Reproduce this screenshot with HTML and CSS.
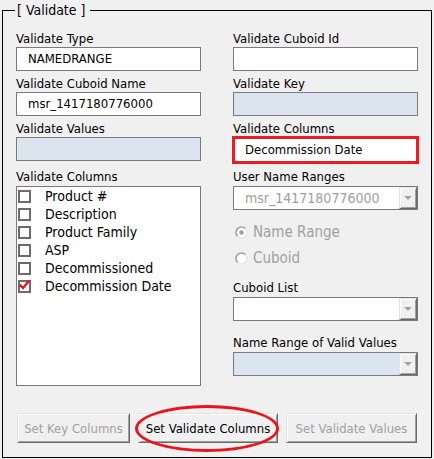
FILE: index.html
```html
<!DOCTYPE html>
<html>
<head>
<meta charset="utf-8">
<link rel="stylesheet" href="styles.css">
</head>
<body>
<fieldset class="frame">
  <legend class="frame-title">[ Validate ]</legend>
  <div class="columns">
    <div class="col">
      <div class="field">
        <div class="lbl">Validate Type</div>
        <div class="box">NAMEDRANGE</div>
      </div>
      <div class="field">
        <div class="lbl">Validate Cuboid Name</div>
        <div class="box">msr_1417180776000</div>
      </div>
      <div class="field">
        <div class="lbl">Validate Values</div>
        <div class="box box-disabled"></div>
      </div>
      <div class="field field-list">
        <div class="lbl">Validate Columns</div>
        <ul class="checklist">
          <li class="check-item"><span class="check"></span>Product #</li>
          <li class="check-item"><span class="check"></span>Description</li>
          <li class="check-item"><span class="check"></span>Product Family</li>
          <li class="check-item"><span class="check"></span>ASP</li>
          <li class="check-item"><span class="check"></span>Decommissioned</li>
          <li class="check-item"><span class="check"><svg class="tick" width="13" height="13" viewBox="0 0 13 13"><path d="M2.5 5.5 L5 8 L10.5 1.5" fill="none" stroke="#e8141e" stroke-width="2.4" stroke-linecap="square"/></svg></span>Decommission Date</li>
        </ul>
      </div>
    </div>
    <div class="col">
      <div class="field">
        <div class="lbl">Validate Cuboid Id</div>
        <div class="box"></div>
      </div>
      <div class="field">
        <div class="lbl">Validate Key</div>
        <div class="box box-disabled"></div>
      </div>
      <div class="field">
        <div class="lbl">Validate Columns</div>
        <div class="box box-marked">Decommission Date</div>
      </div>
      <div class="field field-gap5">
        <div class="lbl">User Name Ranges</div>
        <div class="combo">
          <span class="combo-value">msr_1417180776000</span>
          <span class="combo-btn"><span class="arrow"></span></span>
        </div>
      </div>
      <div class="radios">
        <div class="radio-row">
          <svg class="radio" width="13" height="13" viewBox="0 0 13 13">
            <circle cx="6.5" cy="6.5" r="5.5" fill="#ffffff"/>
            <path d="M2.6 10.4 A5.5 5.5 0 0 1 10.4 2.6" fill="none" stroke="#a0a0a0" stroke-width="1.6"/>
            <path d="M10.4 2.6 A5.5 5.5 0 0 1 2.6 10.4" fill="none" stroke="#e3e3e3" stroke-width="1.2"/>
            <circle cx="6.5" cy="6.5" r="2.2" fill="#a0a0a0"/>
          </svg>
          <span class="radio-text">Name Range</span>
        </div>
        <div class="radio-row">
          <svg class="radio" width="13" height="13" viewBox="0 0 13 13">
            <circle cx="6.5" cy="6.5" r="5.5" fill="#ffffff"/>
            <path d="M2.6 10.4 A5.5 5.5 0 0 1 10.4 2.6" fill="none" stroke="#a0a0a0" stroke-width="1.6"/>
            <path d="M10.4 2.6 A5.5 5.5 0 0 1 2.6 10.4" fill="none" stroke="#e3e3e3" stroke-width="1.2"/>
          </svg>
          <span class="radio-text">Cuboid</span>
        </div>
      </div>
      <div class="field field-gap12">
        <div class="lbl">Cuboid List</div>
        <div class="combo">
          <span class="combo-value"></span>
          <span class="combo-btn"><span class="arrow"></span></span>
        </div>
      </div>
      <div class="field field-gap14">
        <div class="lbl">Name Range of Valid Values</div>
        <div class="combo combo-disabled">
          <span class="combo-value"></span>
          <span class="combo-btn"><span class="arrow"></span></span>
        </div>
      </div>
    </div>
  </div>
  <div class="buttons">
    <button class="btn btn-key" disabled>Set Key Columns</button>
    <button class="btn btn-active">Set Validate Columns<span class="ring"></span></button>
    <button class="btn btn-values" disabled>Set Validate Values</button>
  </div>
</fieldset>
</body>
</html>
```

FILE: styles.css
```css
html, body {
  margin: 0;
  padding: 0;
  background: #f0f0f0;
}

body {
  width: 434px;
  height: 459px;
  overflow: hidden;
  font-family: "DejaVu Sans Condensed", "DejaVu Sans", sans-serif;
  font-stretch: condensed;
  font-size: 13px;
  color: #000;
}

.frame {
  box-sizing: border-box;
  width: 430px;
  margin: 1px 0 0 2px;
  padding: 12px 13px 14px 13px;
  border: 1px solid #000;
  min-width: 0;
}

.frame-title {
  font-size: 14px;
  line-height: 18px;
  padding: 0 5px 0 2px;
  margin-left: -1px;
}

.columns {
  display: grid;
  grid-template-columns: 185px 185px;
  column-gap: 32px;
  align-items: start;
}

.col {
  display: flex;
  flex-direction: column;
}

.field {
  display: flex;
  flex-direction: column;
}

.field + .field {
  margin-top: 5px;
}

.field.field-list {
  margin-top: 8px;
}

.field.field-gap5 {
  margin-top: 5px;
}

.field.field-gap12 {
  margin-top: 12px;
}

.field.field-gap14 {
  margin-top: 14px;
}

.lbl {
  height: 15px;
  line-height: 15px;
  white-space: nowrap;
}

.box {
  box-sizing: border-box;
  height: 24px;
  margin-top: 1px;
  border: 1px solid #7a7a7a;
  background: #fff;
  padding-left: 11px;
  line-height: 22px;
  font-size: 13px;
  white-space: nowrap;
}

.box-disabled {
  background: #dce5ef;
}

.box-marked {
  height: 28px;
  margin-top: 0;
  margin-left: -1px;
  width: 187px;
  border: 3px solid #ec1c24;
  padding-left: 10px;
  line-height: 22px;
}

.checklist {
  list-style: none;
  margin: 2px 0 0 0;
  padding: 0;
  box-sizing: border-box;
  height: 200px;
  border: 1px solid #7a7a7a;
  background: #fff;
}

.check-item {
  display: flex;
  align-items: flex-start;
  height: 18px;
  line-height: 18px;
  font-size: 14px;
  white-space: nowrap;
}

.check {
  position: relative;
  box-sizing: border-box;
  flex: none;
  width: 13px;
  height: 13px;
  margin: 3px 14px 0 1px;
  border: 2px solid #6b6b6b;
  background: #fff;
}

.tick {
  position: absolute;
  left: -2px;
  top: -2px;
  overflow: visible;
}

.combo {
  box-sizing: border-box;
  display: flex;
  height: 24px;
  margin-top: 2px;
  border: 1px solid #7a7a7a;
  background: #fff;
}

.combo-disabled {
  background: #dce5ef;
}

.combo-value {
  flex: 1;
  padding-left: 11px;
  line-height: 22px;
  font-size: 14px;
  color: #a0a0a0;
  white-space: nowrap;
  overflow: hidden;
}

.combo-btn {
  box-sizing: border-box;
  flex: none;
  width: 18px;
  height: 22px;
  display: flex;
  align-items: center;
  justify-content: center;
  background: #f0f0f0;
  border-style: solid;
  border-width: 1px;
  border-color: #e3e3e3 #696969 #696969 #e3e3e3;
  box-shadow: inset 1px 1px #ffffff, inset -1px -1px #a0a0a0;
}

.arrow {
  width: 0;
  height: 0;
  border-left: 4px solid transparent;
  border-right: 4px solid transparent;
  border-top: 4px solid #a0a0a0;
}

.radios {
  display: flex;
  flex-direction: column;
  gap: 6px;
  margin-top: 12px;
}

.radio-row {
  display: flex;
  align-items: center;
  height: 20px;
  line-height: 20px;
  font-size: 15px;
  color: #a0a0a0;
}

.radio {
  flex: none;
  margin: 0 5px 0 2px;
}

.buttons {
  display: flex;
  gap: 8px;
  margin-top: 27px;
  padding-left: 1px;
}

.btn {
  position: relative;
  box-sizing: border-box;
  height: 30px;
  padding: 0;
  font-family: inherit;
  font-stretch: condensed;
  font-size: 13px;
  background: #f0f0f0;
  border-style: solid;
  border-width: 1px;
  border-color: #e3e3e3 #696969 #696969 #e3e3e3;
  box-shadow: inset 1px 1px #ffffff, inset -1px -1px #a0a0a0;
  color: #000;
}

.btn[disabled] {
  color: #a0a0a0;
}

.btn-key {
  width: 113px;
}

.btn-active {
  width: 140px;
}

.btn-values {
  width: 131px;
}

.ring {
  position: absolute;
  left: -4px;
  top: -9px;
  width: 144px;
  height: 47px;
  box-sizing: border-box;
  border: 3px solid #e8141e;
  border-radius: 50%;
  pointer-events: none;
}
```
